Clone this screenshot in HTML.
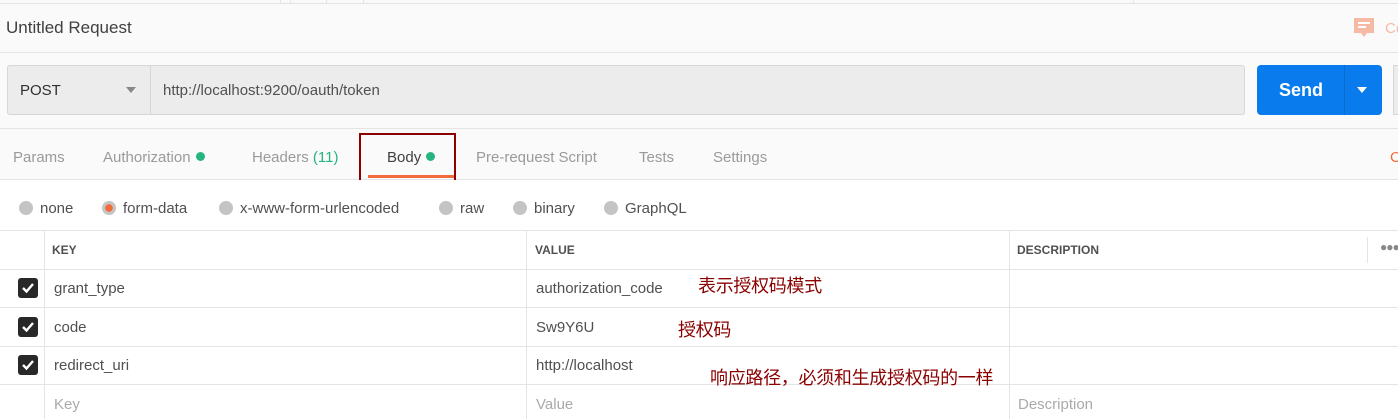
<!DOCTYPE html>
<html><head><meta charset="utf-8"><style>
*{margin:0;padding:0;box-sizing:border-box}
body{width:1398px;height:419px;overflow:hidden;background:#fafafa;font-family:"Liberation Sans","Noto Sans CJK SC",sans-serif;position:relative;color:#505050}
.a{position:absolute;white-space:nowrap}
.hl{position:absolute;height:1px;background:#e4e4e4}
.vl{position:absolute;width:1px;background:#e4e4e4}
.tab{position:absolute;top:149px;font-size:15px;color:#9a9a9a}
.dot{display:inline-block;width:9px;height:9px;border-radius:50%;background:#26b47f;margin-left:5px;vertical-align:1px}
.rad{position:absolute;top:200px;font-size:15px;color:#505050}
.rad i{display:inline-block;width:14px;height:14px;border-radius:50%;background:#c4c4c4;vertical-align:-2px;margin-right:7px}
.cb{position:absolute;left:18px;width:20px;height:20px;background:#282828;border-radius:3px}
.cb svg{position:absolute;left:3px;top:3px}
.cell{position:absolute;font-size:15px;color:#505050}
.zh{position:absolute;font-size:18px;color:#8b0000;font-family:"Noto Sans CJK SC",sans-serif;letter-spacing:-0.3px}
</style></head><body>
<div class="hl" style="top:3px;left:0;width:1398px"></div>
<div class="vl" style="left:280px;top:0;height:3px"></div>
<div class="vl" style="left:290px;top:0;height:3px"></div>
<div class="vl" style="left:326px;top:0;height:3px"></div>
<div class="vl" style="left:363px;top:0;height:3px"></div>
<div class="vl" style="left:1133px;top:0;height:3px"></div>
<div class="a" style="left:6px;top:18px;font-size:17px;color:#404040">Untitled Request</div>
<svg class="a" style="left:1353px;top:17px" width="22" height="22" viewBox="0 0 22 22"><path d="M1 1h20v15h-7l-3 4-3-4H1z" fill="#f6b9a3"/><rect x="5" y="5" width="12" height="2" fill="#fff"/><rect x="5" y="9" width="8" height="2" fill="#fff"/></svg>
<div class="a" style="left:1385px;top:20px;font-size:15px;color:#f6b9a3">Co</div>
<div class="hl" style="top:52px;left:0;width:1398px"></div>
<div class="a" style="left:7px;top:65px;width:1238px;height:50px;background:#ececec;border:1px solid #d6d6d6;border-radius:3px"></div>
<div class="vl" style="left:150px;top:66px;height:48px;background:#d6d6d6"></div>
<div class="a" style="left:20px;top:82px;font-size:15px;color:#303030">POST</div>
<svg class="a" style="left:126px;top:87px" width="10" height="6"><path d="M0 0h10L5 6z" fill="#888"/></svg>
<div class="a" style="left:163px;top:82px;font-size:15px;color:#505050">http://localhost:9200/oauth/token</div>
<div class="a" style="left:1257px;top:65px;width:125px;height:50px;background:#097bed;border-radius:4px"></div>
<div class="vl" style="left:1344px;top:65px;height:50px;background:#0a6bd0"></div>
<div class="a" style="left:1279px;top:80px;font-size:18px;font-weight:bold;color:#fff">Send</div>
<svg class="a" style="left:1357px;top:87px" width="10" height="6"><path d="M0 0h10L5 6z" fill="#fff"/></svg>
<div class="a" style="left:1393px;top:65px;width:6px;height:50px;background:#ececec;border:1px solid #d6d6d6"></div>
<div class="hl" style="top:128px;left:0;width:1398px"></div>
<div class="tab" style="left:13px">Params</div>
<div class="tab" style="left:103px">Authorization<span class="dot"></span></div>
<div class="tab" style="left:252px">Headers <span style="color:#26b47f">(11)</span></div>
<div class="tab" style="left:387px;color:#404040">Body<span class="dot"></span></div>
<div class="tab" style="left:476px">Pre-request Script</div>
<div class="tab" style="left:639px">Tests</div>
<div class="tab" style="left:713px">Settings</div>
<div class="a" style="left:1390px;top:149px;font-size:15px;color:#f26b3a">C</div>
<div class="hl" style="top:179px;left:0;width:1398px"></div>
<div class="a" style="left:368px;top:175px;width:88px;height:3px;background:#f26b3a"></div>
<div class="a" style="left:359px;top:133px;width:97px;height:49px;border:2px solid #8b0000"></div>
<div class="a" style="left:0;top:180px;width:1398px;height:239px;background:#fff"></div>
<div class="rad" style="left:19px"><i></i>none</div>
<div class="rad" style="left:102px"><i style="background:radial-gradient(circle,#f26b3a 0 3.5px,#c4c4c4 4px)"></i>form-data</div>
<div class="rad" style="left:219px"><i></i>x-www-form-urlencoded</div>
<div class="rad" style="left:439px"><i></i>raw</div>
<div class="rad" style="left:513px"><i></i>binary</div>
<div class="rad" style="left:604px"><i></i>GraphQL</div>
<div class="hl" style="top:230px;left:0;width:1398px"></div>
<div class="hl" style="top:269px;left:0;width:1398px"></div>
<div class="hl" style="top:307px;left:0;width:1398px"></div>
<div class="hl" style="top:346px;left:0;width:1398px"></div>
<div class="hl" style="top:384px;left:0;width:1398px"></div>
<div class="vl" style="left:44px;top:231px;height:188px"></div>
<div class="vl" style="left:526px;top:231px;height:188px"></div>
<div class="vl" style="left:1009px;top:231px;height:188px"></div>
<div class="vl" style="left:1367px;top:237px;height:26px"></div>
<div class="a" style="left:52px;top:243px;font-size:12px;font-weight:bold;color:#505050">KEY</div>
<div class="a" style="left:535px;top:243px;font-size:12px;font-weight:bold;color:#505050">VALUE</div>
<div class="a" style="left:1017px;top:243px;font-size:12px;font-weight:bold;color:#505050">DESCRIPTION</div>
<div class="a" style="left:1380px;top:240px;font-size:12px;color:#888;letter-spacing:-1px">●●●</div>
<div class="cb" style="top:278px"><svg width="14" height="14"><path d="M2 7l3.5 3.5L12 3" stroke="#fff" stroke-width="2.4" fill="none"/></svg></div>
<div class="cb" style="top:317px"><svg width="14" height="14"><path d="M2 7l3.5 3.5L12 3" stroke="#fff" stroke-width="2.4" fill="none"/></svg></div>
<div class="cb" style="top:355px"><svg width="14" height="14"><path d="M2 7l3.5 3.5L12 3" stroke="#fff" stroke-width="2.4" fill="none"/></svg></div>
<div class="cell" style="left:54px;top:280px">grant_type</div>
<div class="cell" style="left:54px;top:319px">code</div>
<div class="cell" style="left:54px;top:357px">redirect_uri</div>
<div class="cell" style="left:54px;top:396px;color:#aaa">Key</div>
<div class="cell" style="left:536px;top:280px">authorization_code</div>
<div class="cell" style="left:536px;top:319px">Sw9Y6U</div>
<div class="cell" style="left:536px;top:357px">http://localhost</div>
<div class="cell" style="left:536px;top:396px;color:#aaa">Value</div>
<div class="cell" style="left:1018px;top:396px;color:#aaa">Description</div>
<div class="zh" style="left:698px;top:272px">表示授权码模式</div>
<div class="zh" style="left:678px;top:316px">授权码</div>
<div class="zh" style="left:710px;top:364px">响应路径，必须和生成授权码的一样</div>
</body></html>
